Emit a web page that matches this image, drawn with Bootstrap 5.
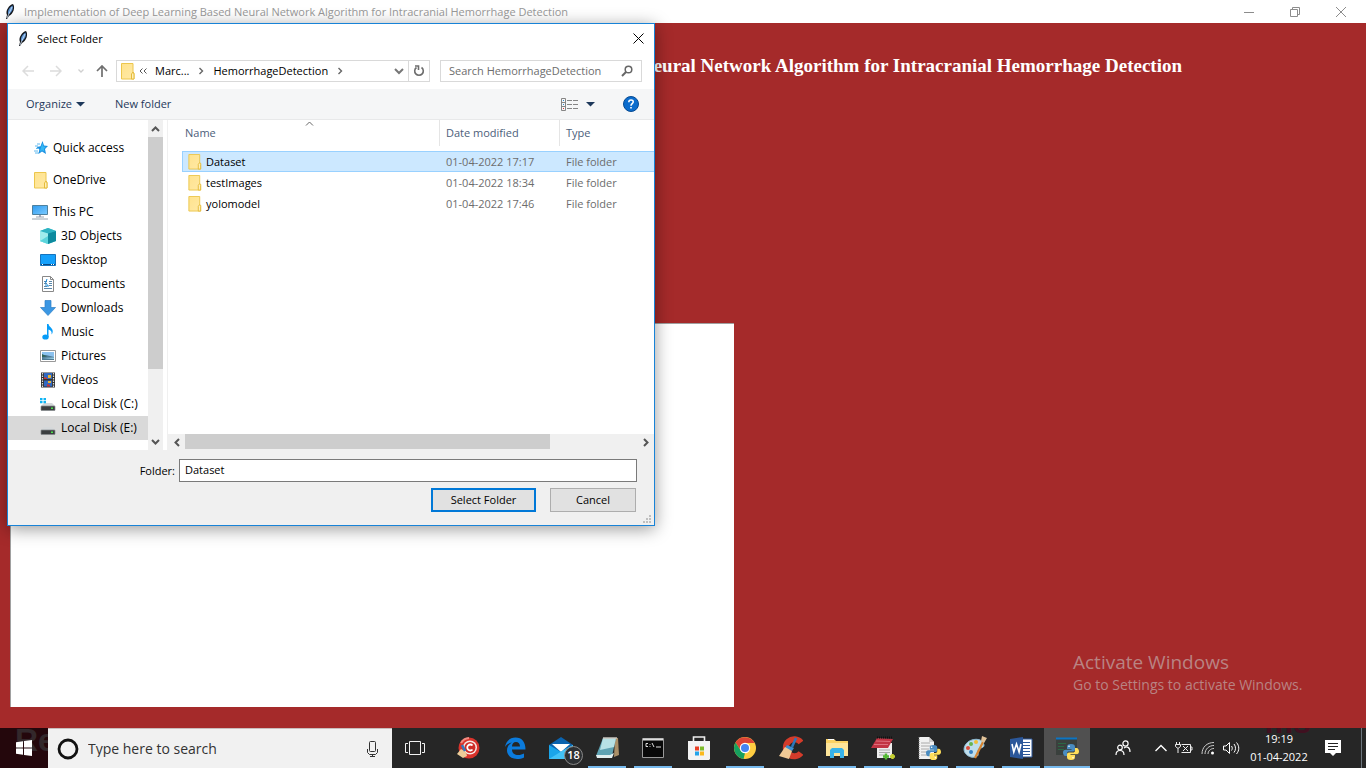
<!DOCTYPE html>
<html lang="en">
<head>
<meta charset="utf-8">
<meta name="viewport" content="width=device-width, initial-scale=1">
<title>Select Folder</title>
<link href="https://cdn.jsdelivr.net/npm/bootstrap@5.3.0/dist/css/bootstrap.min.css" rel="stylesheet">
<style>
body{font-family:"Open Sans","Noto Sans",sans-serif;font-size:11px;line-height:16px;color:#000;background:#a52a2a;overflow:hidden}
button{font:inherit;color:inherit;border:0;background:none;padding:0}
svg{display:block;flex:none}
a{color:inherit;text-decoration:none}
.app-bar{height:23px;background:#fff;color:#999;padding:0 2px 0 4px}
.win-btn{width:46px;height:20px;display:flex;align-items:center;justify-content:center}
.app-heading{font:bold 19px/24px "Liberation Serif",serif;color:#fff;padding:31px 184px 0 0;white-space:nowrap}
.canvas-text{width:53%;height:384px;margin:0 0 21px 10px;border:0;border-left:1px solid #a0a0a0;border-top:1px solid #a0a0a0;resize:none;background:#fff;border-radius:0;display:block}
.dialog-win{position:absolute;left:7px;top:23px;width:648px;background:#fff;border:1px solid #1883d7;box-shadow:0 3px 16px rgba(0,0,0,.4);z-index:5}
.dlg-title{height:29px;padding:0 10px 0 9px}
.addr-row{height:36px;padding:0 12px 0 10px}
.addr-box{height:22px;border:1px solid #d9d9d9}
.addr-path{width:293px}
.find-field{width:202px}
.find-field input,.folder-field{border:0;outline:0;font:inherit;padding:0;background:none;color:#000}
.find-field input::placeholder{color:#6d6d6d;opacity:1}
.cmd-row{height:31px;background:#f5f6f7;border-bottom:1px solid #e8e9ea;color:#1e395b;padding:0 15px 0 18px}
.new-btn{margin-left:30px}
.dlg-body{height:330px}
.side-tree{width:140px;padding-top:16px;overflow:hidden;font-size:12px}
.side-tree a{display:flex;align-items:center;height:24px;white-space:nowrap;gap:5px;padding-left:24px}
.side-tree a.sub-item{padding-left:32px}
.side-tree a.top-item{margin-bottom:8px;padding-left:25px;gap:4px}
.side-tree a.picked{background:#d9d9d9}
.bar-v{width:15px;background:#f0f0f0}
.bar-v .thumb{height:232px;background:#cdcdcd}
.bar-v .arrow,.bar-h .arrow{width:17px;height:17px;display:flex;align-items:center;justify-content:center}
.bar-v .arrow{width:15px}
.bar-h{height:16px;background:#f0f0f0}
.bar-h .thumb{width:365px;height:15px;background:#cdcdcd}
.file-pane{border-left:1px solid #f0f0f0;margin-left:4px}
.files{table-layout:fixed;width:472px;margin-left:14px;border-collapse:separate;border-spacing:0}
.files th{font-weight:400;color:#4c607a;height:26px;padding:0 0 0 6px;border-left:1px solid #e5e5e5}
.files th:first-child{border-left:0;padding-left:3px}
.files tbody::before{content:"";display:block;height:5px}
.files td{height:21px;padding:0 0 0 7px;color:#6d6d6d;white-space:nowrap;border:1px solid transparent;border-width:1px 0}
.files td:first-child{color:#000;padding-left:5px;border-left-width:1px}
.files .chosen td{background:#cce8ff;border-color:#99d1ff}
.sort-mark{position:absolute;left:137px;top:1px}
.dlg-foot{background:#f0f0f0;height:75px;padding:9px 17px 0 0}
.folder-field{width:458px;height:23px;border:1px solid #7a7a7a;background:#fff;padding:0 5px 2px}
.btn-row{gap:14px;padding:6px 1px 0 0}
.dlg-btn{height:24px;background:#e1e1e1;border:1px solid #adadad;width:86px}
.dlg-btn.main-btn{width:105px;border:2px solid #0078d7}
.grip{position:absolute;right:3px;bottom:2px}
.activate{position:absolute;left:1073px;bottom:73px;color:#b98383;font-size:14px;line-height:20px}
.activate div{font-size:19px;line-height:26px}
.taskbar{height:40px;background:#262626;color:#fff;position:relative;z-index:6}
.start-btn{width:48px;background:#24070c;position:relative;overflow:hidden;display:flex;align-items:center;justify-content:center}
.start-btn svg{position:relative}
.ghost{position:absolute;font:bold 32px/32px "Liberation Sans",sans-serif;color:#33282b;left:15px;top:-4px}
.task-search{width:344px;background:#f1f1f1;border-top:1px solid #c9bcbc;padding:0 12px 0 8px}
.task-search input{border:0;background:none;outline:0;font-size:14px;padding:0}
.task-search input::placeholder{color:#333;opacity:1}
.task-app{width:46px;height:40px;display:flex;align-items:center;justify-content:center;position:relative}
.task-app.running::after{content:"";position:absolute;left:4px;right:4px;bottom:0;height:2px;background:#76b9ed}
.task-app.active-app{background:#505050}
.task-app.active-app::after{left:0;right:0}
.mail-count{position:absolute;left:26px;top:18px;width:19px;height:19px;border-radius:50%;background:#2d3033;border:1px solid #8a8a8a;font-weight:600;text-align:center}
.clock-box{width:60px;text-align:center;line-height:18px;white-space:nowrap;position:relative}
.ghost-end{position:absolute;left:14px;top:-2px;width:50px;height:8px;overflow:hidden;color:#401020}
.ghost-end span{position:absolute;top:-22px;right:2px;font:bold 32px/32px "Liberation Sans",sans-serif}
.tray-btn{height:40px;display:flex;align-items:center;justify-content:center}
</style>
</head>
<body>
<svg width="0" height="0" class="position-absolute" aria-hidden="true">
<defs>
<linearGradient id="fold" x2="1" y2="1"><stop stop-color="#ffe38d"/><stop offset="1" stop-color="#ffe9a6"/></linearGradient>
<linearGradient id="scr" x2="1" y2="1"><stop stop-color="#2e9bf0"/><stop offset="1" stop-color="#7ccbff"/></linearGradient>
<symbol id="folder" viewBox="0 0 14 17"><path d="M.5.500h11.500v8.500l1 1v6H.5z" fill="url(#fold)" stroke="#ecc64c"/><path d="M10.500 16v-5l1.500-2 1 2V16z" fill="#fff0b8" stroke="#e5bb3a"/></symbol>
<symbol id="feather" viewBox="0 0 10 16"><path d="M1 15 2 11C0 7 4 1 8 0 10.500 3 8.500 10 4 12L2 15z" fill="#16191f"/><path d="M3 9.500C2.500 6 5 3 7.500 1.500 8.500 5 7 8 4 10z" fill="#5a94d6"/><path d="M2 14 7 3" stroke="#d2e4f7" stroke-width=".8"/></symbol>
<symbol id="python" viewBox="0 0 16 16"><path d="M8 0C5 0 4 1 4 3v2h4.500v.7H2.500C.8 5.700 0 7 0 8.500S.8 12 2.500 12H4V9.500C4 8 5 7.500 6 7.500h4c1.200 0 2-.8 2-2V3c0-2-1-3-4-3z" fill="#4a8cc0"/><path d="M8 16c3 0 4-1 4-3v-2H7.500v-.7h6C15.200 10.300 16 9 16 7.500S15.200 4 13.500 4H12v2.500c0 1.500-1 2-2 2H6c-1.200 0-2 .8-2 2V13c0 2 1 3 4 3z" fill="#ffdf5a"/><circle cx="6" cy="2.300" r=".8" fill="#fff"/><circle cx="10" cy="13.700" r=".8" fill="#fff"/></symbol>
<symbol id="drive" viewBox="0 0 16 16"><path d="M4 7h8l3 3H1z" fill="#d5d8da"/><rect x="1" y="10" width="14" height="4.500" rx=".6" fill="#3b3e40" stroke="#85898c" stroke-width=".7"/><rect x="11" y="11.500" width="2" height="1.500" fill="#4be04b"/></symbol>
</defs></svg>

<div class="d-flex flex-column vh-100">
<header class="app-bar d-flex align-items-center">
 <svg width="12" height="16"><use href="#feather"/></svg>
 <span class="ms-2 me-auto">Implementation of Deep Learning Based Neural Network Algorithm for Intracranial Hemorrhage Detection</span>
 <button class="win-btn" aria-label="Minimize"><svg width="10" height="10"><path d="M0 5.500h10" stroke="#8c8c8c"/></svg></button>
 <button class="win-btn" aria-label="Restore"><svg width="10" height="10" fill="none" stroke="#8c8c8c"><path d="M.5 2.500h7v7h-7zM2.500 2.500v-2h7v7h-2"/></svg></button>
 <button class="win-btn" aria-label="Close"><svg width="10" height="10"><path d="M0 0l10 10M10 0 0 10" stroke="#8c8c8c"/></svg></button>
</header>

<main class="flex-grow-1 d-flex flex-column">
 <h1 class="app-heading text-end mb-auto">Implementation of Deep Learning Based Neural Network Algorithm for Intracranial Hemorrhage Detection</h1>
 <textarea class="canvas-text" aria-label="Output"></textarea>
</main>

<section class="dialog-win" role="dialog" aria-label="Select Folder">
 <div class="dlg-title d-flex align-items-center">
  <svg width="12" height="16"><use href="#feather"/></svg><span class="ms-2 me-auto">Select Folder</span>
  <button aria-label="Close dialog"><svg width="11" height="11"><path d="M.5.5l10 10M10.500.5l-10 10" stroke="#000"/></svg></button>
 </div>
 <div class="addr-row d-flex align-items-center">
  <button class="ms-1" aria-label="Back"><svg width="12" height="12" fill="none" stroke="#dcdcdc" stroke-width="1.500"><path d="M12 6H1M6 1 1 6l5 5"/></svg></button>
  <button class="ms-3" aria-label="Forward"><svg width="12" height="12" fill="none" stroke="#dcdcdc" stroke-width="1.500"><path d="M0 6h11M6 1l5 5-5 5"/></svg></button>
  <button class="ms-3" aria-label="Recent"><svg width="6" height="6" fill="none" stroke="#d0d0d0" stroke-width="1.300"><path d="M.5 1.500 3 4l2.500-2.500"/></svg></button>
  <button class="ms-2 ps-1 me-2" aria-label="Up"><svg width="12" height="12" fill="none" stroke="#6f6f6f" stroke-width="1.700"><path d="M6 12V1M1 6l5-5 5 5"/></svg></button>
  <div class="addr-box addr-path d-flex align-items-center">
   <svg class="ms-1" width="14" height="17"><use href="#folder"/></svg>
   <svg class="ms-1" width="8" height="8" fill="none" stroke="#555"><path d="M3.500 1.500 1 4l2.500 2.500M7.500 1.500 5 4l2.500 2.500"/></svg>
   <a href="#" class="ms-2">Marc...</a>
   <svg class="mx-2" width="8" height="8" fill="none" stroke="#666" stroke-width="1.400"><path d="M2.500 1 5.500 4l-3 3"/></svg>
   <a href="#">HemorrhageDetection</a>
   <svg class="ms-2 me-auto" width="8" height="8" fill="none" stroke="#666" stroke-width="1.400"><path d="M2.500 1 5.500 4l-3 3"/></svg>
   <button class="me-1" aria-label="Previous locations"><svg width="10" height="8" fill="none" stroke="#777" stroke-width="2"><path d="M1 2l4 4 4-4"/></svg></button>
  </div>
  <button class="addr-box border-start-0 px-1" aria-label="Refresh"><svg width="12" height="12" fill="none" stroke="#6d6d6d" stroke-width="1.600"><path d="M8.500 2.500A4.300 4.300 0 1 1 3.500 2.500"/><path d="M2 1h3.500V5" /></svg></button>
  <div class="addr-box find-field d-flex align-items-center ms-auto px-2">
   <input class="flex-grow-1" type="text" aria-label="Search" placeholder="Search HemorrhageDetection">
   <svg width="12" height="12" fill="none" stroke="#666"><circle cx="7.500" cy="4.500" r="3.300" stroke-width="1.500"/><path d="M5 7 1 11" stroke-width="2"/></svg>
  </div>
 </div>
 <div class="cmd-row d-flex align-items-center">
  <button class="d-flex align-items-center">Organize<svg class="ms-1" width="9" height="5"><path d="M0 0h9L4.500 4.500z" fill="#1e395b"/></svg></button>
  <button class="new-btn me-auto">New folder</button>
  <button class="d-flex align-items-center me-4" aria-label="Change view">
   <svg width="17" height="13" fill="none" stroke="#858585"><path d="M.5.5h4v12h-4zM.5 4.500h4M.5 8.500h4"/><path d="M6 2.500h11M6 6.500h11M6 10.500h11" stroke-dasharray="5 1"/><path d="M2 10.500h1" stroke="#d33"/><path d="M2 2.500h1M2 6.500h1" stroke="#38c"/></svg>
   <svg class="ms-2 me-1" width="9" height="5"><path d="M0 0h9L4.500 4.500z" fill="#1e395b"/></svg></button>
  <button aria-label="Help"><svg width="16" height="16"><circle cx="8" cy="8" r="7.500" fill="#0b6ccd" stroke="#064a92"/><path d="M5.800 6.200c0-3 4.600-2.900 4.400-.2C10.100 7.600 8 7.800 8 9.800M8 11v1.600" fill="none" stroke="#fff" stroke-width="1.600"/></svg></button>
 </div>
 <div class="dlg-body d-flex">
  <nav class="side-tree" aria-label="Places">
   <a href="#" class="top-item"><svg width="16" height="14"><path d="m9.500 0 1.500 4.500 4 .5-3 3 1 5-4-2.500L5.500 13l.8-4.500L3.500 6l4-.8z" fill="#1b8fe0"/><path d="m9.500 2 1 3.500 2.500.3-2 2 .5 3-2.500-1.500-2 1.500.5-3z" fill="#35b8f5"/><path d="M4 3h3M2 5h3M3 7.500h3M1 10h4M2 12h4" stroke="#5fb8ee"/></svg>Quick access</a>
   <a href="#" class="top-item"><svg width="16" height="17"><use href="#folder"/></svg>OneDrive</a>
   <a href="#"><svg width="16" height="16"><path d="M.5 1.500h15v9H.5z" fill="url(#scr)" stroke="#4d819f"/><path d="M7 11h2v2H7z" fill="#aab"/><path d="M4 13h8M0 15h16" stroke="#9aa6b0"/></svg>This PC</a>
   <a href="#" class="sub-item"><svg width="16" height="16"><path d="m8 0 8 3v10l-8 3-8-3V3z" fill="#43c5d4"/><path d="M8 0l8 3-8 2.500L0 3z" fill="#2fb3c2"/><path d="M0 3l8 2.500V16L0 13z" fill="#9fecec"/><path d="M0 13l8-5v8z" fill="#5cd5dc"/><path d="M8 5.500 16 3v10l-8 3z" fill="#0d8a9e"/></svg>3D Objects</a>
   <a href="#" class="sub-item"><svg width="16" height="12"><path d="M.5.500h15v11H.5z" fill="#14a0fb" stroke="#1673bd"/><path d="M1 10.500h14" stroke="#064a86"/><path d="M2 10.500h2M11 10.500h3" stroke="#fff" stroke-dasharray="1"/></svg>Desktop</a>
   <a href="#" class="sub-item"><svg width="16" height="16"><path d="M2.500.500h8l3 3v12h-11z" fill="#fff" stroke="#888"/><path d="M10.500.500v3h3" fill="none" stroke="#888"/><path d="M4 5.500h3M9 5.500h3M4 7.500h3M9 7.500h3M4 10.500h3M9 9.500h3M4 12.500h8" stroke="#5a88ab"/><path d="M7 3l-1.500 4M5 9h3v2" stroke="#1489d8" fill="none"/></svg>Documents</a>
   <a href="#" class="sub-item"><svg width="16" height="16"><path d="M5 .5h6v7h4.500L8 15.500.500 7.500H5z" fill="#3b97e3" stroke="#2d7ec5" stroke-width=".7"/></svg>Downloads</a>
   <a href="#" class="sub-item"><svg width="16" height="16"><ellipse cx="5.500" cy="13" rx="3.200" ry="2.600" fill="#069cf8"/><path d="M7 0h1.500c.5 3.500 5.500 4 4 9l-1 1.500c.5-3-.5-4-3-5V13H7z" fill="#069cf8"/></svg>Music</a>
   <a href="#" class="sub-item"><svg width="16" height="12"><path d="M.5.500h15v11H.5z" fill="#fff" stroke="#999"/><path d="M2 2h12v8H2z" fill="#8cc2ef"/><path d="M2 5h4l8 2v3H2z" fill="#4d7a94"/><path d="M2 4l5 2.500L2 7z" fill="#2f6358"/><path d="M2 8l12-.500V9z" fill="#9ed5ee"/></svg>Pictures</a>
   <a href="#" class="sub-item"><svg width="16" height="16"><path d="M1 .5h14v15H1z" fill="#333"/><path d="M2.500 1v15M13.500 1v15" stroke="#ddd" stroke-width="1.200" stroke-dasharray="1.500 1"/><path d="M4 1h8v6H4zM4 8.500h8v6H4z" fill="#3169c2"/><path d="M4 5l3 1v1H4zM7 12l3 1v1.500H7z" fill="#c33"/><path d="M8 3h3v3H8zM8 9h3v2H8z" fill="#e9b432"/></svg>Videos</a>
   <a href="#" class="sub-item"><svg width="16" height="16"><use href="#drive"/><path d="M0 2h2.500v2.300H0zM3.500 2H6v2.300H3.500zM0 5h2.500v2.300H0zM3.500 5H6v2.300H3.500z" fill="#0eb4f4"/></svg>Local Disk (C:)</a>
   <a href="#" class="sub-item picked"><svg width="16" height="16"><use href="#drive"/></svg>Local Disk (E:)</a>
  </nav>
  <div class="bar-v d-flex flex-column">
   <div class="arrow"><svg width="9" height="6" fill="none" stroke="#555" stroke-width="2"><path d="M1 5l3.500-3.500L8 5"/></svg></div><div class="thumb"></div>
   <div class="arrow mt-auto"><svg width="9" height="6" fill="none" stroke="#555" stroke-width="2"><path d="M1 1l3.500 3.500L8 1"/></svg></div>
  </div>
  <div class="file-pane flex-grow-1 d-flex flex-column">
   <div class="position-relative overflow-hidden">
   <svg class="sort-mark" width="9" height="5" fill="none" stroke="#666"><path d="M1 4.500l3.500-3.500L8 4.500"/></svg>
   <table class="files"><colgroup><col style="width:257px"><col style="width:120px"><col></colgroup>
    <thead><tr><th>Name</th><th>Date modified</th><th>Type</th></tr></thead>
    <tbody>
     <tr class="chosen"><td><span class="d-flex align-items-center"><svg class="me-1" width="14" height="16"><use href="#folder"/></svg>Dataset</span></td><td>01-04-2022 17:17</td><td>File folder</td></tr>
     <tr><td><span class="d-flex align-items-center"><svg class="me-1" width="14" height="16"><use href="#folder"/></svg>testImages</span></td><td>01-04-2022 18:34</td><td>File folder</td></tr>
     <tr><td><span class="d-flex align-items-center"><svg class="me-1" width="14" height="16"><use href="#folder"/></svg>yolomodel</span></td><td>01-04-2022 17:46</td><td>File folder</td></tr>
    </tbody></table></div>
   <div class="bar-h d-flex mt-auto">
    <div class="arrow"><svg width="6" height="9" fill="none" stroke="#555" stroke-width="2"><path d="M5 1 1.500 4.500 5 8"/></svg></div><div class="thumb"></div>
    <div class="arrow ms-auto"><svg width="6" height="9" fill="none" stroke="#555" stroke-width="2"><path d="M1 1l3.500 3.500L1 8"/></svg></div>
   </div>
  </div>
 </div>
 <div class="dlg-foot">
  <div class="d-flex justify-content-end align-items-center"><label for="folderName" class="me-1">Folder:</label><input id="folderName" class="folder-field" type="text" value="Dataset"></div>
  <div class="btn-row d-flex justify-content-end"><button class="dlg-btn main-btn">Select Folder</button><button class="dlg-btn">Cancel</button></div>
 </div>
 <svg class="grip" width="8" height="8" fill="#bfbfbf"><path d="M6 0h2v2H6zM3 3h2v2H3zM6 3h2v2H6zM0 6h2v2H0zM3 6h2v2H3zM6 6h2v2H6z"/></svg>
</section>

<aside class="activate"><div>Activate Windows</div>Go to Settings to activate Windows.</aside>

<footer class="taskbar d-flex">
 <button class="start-btn" aria-label="Start"><span class="ghost" aria-hidden="true">Re</span><svg width="16" height="16" fill="#fff"><path d="M0 2.200 7 1.200v6.300H0zM8 1l8-1v7.500H8zM0 8.500h7v6.300l-7-1zM8 8.500h8V16l-8-1z"/></svg></button>
 <div class="task-search d-flex align-items-center">
  <svg width="24" height="24"><circle cx="12" cy="12" r="9" fill="none" stroke="#111" stroke-width="2.800"/></svg>
  <input class="flex-grow-1 ms-2" type="text" aria-label="Type here to search" placeholder="Type here to search">
  <svg width="16" height="18" fill="none" stroke="#333"><rect x="5.500" y="1.500" width="6" height="10" rx="1"/><path d="M3.500 9v3.500l2 2h6l2-2V9M8.500 14.500V17M6 16.500h5"/></svg>
 </div>
 <button class="task-app me-1" aria-label="Task view"><svg width="20" height="14" fill="none" stroke="#f2f2f2"><path d="M4.500.5h11v13h-11zM3 2.500H.5v9H3M17 2.500h2.500v9H17"/></svg></button>
 <div class="d-flex ms-1">
 <button class="task-app" aria-label="Cleaner tool"><svg width="24" height="24"><circle cx="12" cy="12" r="10.500" fill="#d9332c"/><path d="M4 7a10 10 0 0 1 8-5" stroke="#f28b80" stroke-width="2" fill="none"/><circle cx="13" cy="11.500" r="7" fill="#f6e9e6"/><circle cx="13" cy="11.500" r="5.500" fill="#cf2c27"/><path d="M15.500 9.500a3 3 0 1 0 0 4" fill="none" stroke="#fff" stroke-width="1.800"/><path d="M4 13l5 3 1 4-4 2-6-4z" fill="#edcc98"/><path d="M5 9l3 6" stroke="#3478bd" stroke-width="2.500"/></svg></button>
 <button class="task-app" aria-label="Edge"><svg width="22" height="22"><path d="M1 10C2 4 6 .5 11.500.5 18 .5 21.500 5 21.500 12.500H8c0 4 3 5.500 6 5.500 2.500 0 4.500-.6 6-1.500v4c-2 1.200-4.500 1.500-7 1.500C7 22 3 18 3 13.500 3 10 5 7 8 5.500 5 6 2.500 7.500 1 10zm7-.5h8C16 7 14.500 5 12 5 9.500 5 8 7 8 9.500z" fill="#0b7bdc" fill-rule="evenodd"/></svg></button>
 <button class="task-app" aria-label="Mail, 18 unread"><svg width="24" height="24"><path d="M0 9l12-8 12 8v14H0z" fill="#0a63af"/><path d="M3 8h18l-9 8z" fill="#fff"/><path d="M0 9l12 7L24 9v14H0z" fill="#1aa5ea"/><path d="M0 23 13 15 24 9v14z" fill="#42c2f7"/></svg><span class="mail-count">18</span></button>
 <button class="task-app running" aria-label="Notepad"><svg width="24" height="24"><path d="M20 2h3l1 17-5 2z" fill="#aa8f68"/><path d="M8 2h13l-4 18H1z" fill="#5fa3b3"/><path d="M8 2h13l-2 9-14 3z" fill="#b7e1e5"/><path d="M1 19h14l4-2-2 5H2z" fill="#e2eff0"/><path d="M8 2h14" stroke="#c9c5be" stroke-width="1.500"/></svg></button>
 <button class="task-app running" aria-label="Command Prompt"><svg width="22" height="20"><path d="M.5.500h21v19H.5z" fill="#080808" stroke="#999"/><path d="M1 1.500h20" stroke="#ddd" stroke-width="2"/><path d="M6 5.500H4v3h2M8 6v.8M8 8v.8M10 5l2 4M14 9h5" stroke="#ddd" fill="none"/></svg></button>
 <button class="task-app" aria-label="Store"><svg width="24" height="24"><path d="M6.500 6V1h11v5" fill="none" stroke="#eee" stroke-width="1.600"/><path d="M1 5h22v18l-1 1H2l-1-1z" fill="#f3f3f3"/><path d="M8 10.500h4v4H8z" fill="#e83e24"/><path d="M13 10.500h4v4h-4z" fill="#7cba2a"/><path d="M8 15.500h4v4H8z" fill="#23a3ea"/><path d="M13 15.500h4v4h-4z" fill="#fbb91c"/></svg></button>
 <button class="task-app running" aria-label="Chrome"><svg width="22" height="22"><circle cx="11" cy="11" r="11" fill="#ffcd41"/><path d="M1.500 5.500A11 11 0 0 1 20.600 6H11L6.700 13.500z" fill="#db4437"/><path d="M1.500 5.500 6.700 13.500l4.300 2.500-1.500 5.900A11 11 0 0 1 1.500 5.500z" fill="#16a05f"/><circle cx="11" cy="11" r="5.200" fill="#fff"/><circle cx="11" cy="11" r="4" fill="#4485f3"/></svg></button>
 <button class="task-app" aria-label="CCleaner"><svg width="24" height="24"><path d="M22 6.500A8.500 8.500 0 1 0 22 17" fill="none" stroke="#d43b2a" stroke-width="6"/><path d="M17 2l-4 9" stroke="#2b77bd" stroke-width="2.500"/><path d="m8 9 7 3-2 3-7-3z" fill="#3b8fd2"/><path d="M6 11l7 4-3 8-10-3z" fill="#f0c995"/></svg></button>
 <button class="task-app running" aria-label="File Explorer"><svg width="22" height="20"><path d="M0 1h8l2 2h12v15H0z" fill="#fbd264"/><path d="M2 1.500h6" stroke="#fff"/><path d="M0 5h22v13H0z" fill="#fee59a"/><path d="M4 20v-8l2-2h10l2 2v8h-4v-5H8v5z" fill="#39b3e8"/></svg></button>
 <button class="task-app running" aria-label="Notes"><svg width="24" height="24"><path d="M6 7h15v15H6z" fill="#eee"/><path d="M8 14h11M8 16.500h11M8 19h8" stroke="#aaa"/><path d="m6 2 16 1-5 9H0z" fill="#c23544"/><path d="m5 5 14 .5M3 8.500h14" stroke="#de6f7c"/><path d="M6 1.500h16" stroke="#111" stroke-width="2" stroke-dasharray="1 1"/><path d="M12 20.500h6M15 17.500v6" stroke="#53b932" stroke-width="2.500"/><path d="M19 20.500h5M21.500 18v5" stroke="#c5cf30" stroke-width="2.500"/></svg></button>
 <button class="task-app running" aria-label="Python script"><svg width="24" height="24"><path d="M2 1h10l5 5v17H2z" fill="#f1f1f1"/><path d="M12 1v5h5" fill="#ccc"/><path d="M4 7h9M4 10h10M4 13h8M4 16h8M4 19h8" stroke="#aaa"/><path d="M2 1v22" stroke="#777" stroke-dasharray="1"/><use href="#python" x="9" y="9" width="15" height="15"/></svg></button>
 <button class="task-app running" aria-label="Paint"><svg width="24" height="24"><path d="M3 8c4-6 17-7 18 1 0 4-5 2-6 5s2 5-2 7C6 23-3 16 3 8z" fill="#bfddeb" stroke="#8cb9d0"/><circle cx="5" cy="12" r="2" fill="#db4c39"/><circle cx="8" cy="8" r="2" fill="#64b451"/><circle cx="13" cy="6" r="2" fill="#f1be38"/><circle cx="8" cy="16" r="2" fill="#357fc2"/><path d="M21 4 12 22" stroke="#d78431" stroke-width="2.200"/><path d="m19 0 5 2-3 5-3-2z" fill="#e1c298"/></svg></button>
 <button class="task-app running" aria-label="Word"><svg width="24" height="24"><path d="M12 3h11v18H12z" fill="#fff" stroke="#2b579a"/><path d="M14 6.500h7M14 9.500h7M14 12.500h7M14 15.500h7M14 18.500h7" stroke="#2b579a"/><path d="M1 3l13-2v22L1 21z" fill="#2b579a"/><path d="m3 8 1.800 8L7.500 8l2.600 8L12 8" fill="none" stroke="#fff" stroke-width="1.600"/></svg></button>
 <button class="task-app running active-app" aria-label="Python app"><svg width="24" height="24"><path d="M1 2h21v17H1z" fill="#3a403d"/><path d="M1 2.500h21" stroke="#0b75c4" stroke-width="2"/><path d="M3 7.500h8M3 10.500h6M3 13.500h6" stroke="#2c6844"/><use href="#python" x="8" y="8" width="16" height="16"/></svg></button>
 </div>
 <div class="d-flex ms-auto align-items-center">
  <button class="tray-btn me-4" aria-label="People"><svg width="16" height="16" fill="none" stroke="#fff" stroke-width="1.200"><circle cx="10.500" cy="3.500" r="2.600"/><circle cx="5" cy="7.500" r="2.300"/><path d="M1 15c0-6 8-6 8 0M9 8c3-2 6-1 6 4"/></svg></button>
  <button class="tray-btn me-2" aria-label="Show hidden icons"><svg width="12" height="8" fill="none" stroke="#fff" stroke-width="1.400"><path d="M.5 7 6 1.500 11.500 7"/></svg></button>
  <button class="tray-btn me-2" aria-label="Battery"><svg width="18" height="14" fill="none" stroke="#eee"><path d="M6.500 3.500h9v8h-9M15.500 6h1.500v3h-1.500M1.500 1v3M4.500 1v3M.5 3.500h5v2L3 7.500.5 5.500zM3 7.500V12M8 5l5 5M13 5l-5 5"/></svg></button>
  <button class="tray-btn me-2" aria-label="Wi-Fi"><svg width="14" height="14" fill="none" stroke="#ccc"><path d="M1 13C1 6 6 1.500 13 1.500M4 13c0-5 4-8.500 9-8.500M7 13c0-3 2.500-5.500 6-5.500"/><circle cx="11.500" cy="12" r="1.500" fill="#fff" stroke="none"/></svg></button>
  <button class="tray-btn me-2" aria-label="Volume"><svg width="18" height="14" fill="none" stroke="#fff"><path d="M.5 5h2.500L6.500 1.500v11L3 9H.5zM8.500 5c1 1.500 1 3 0 4.500M11 3c2 2.500 2 6 0 8.500M13.500 1.500c3 3.500 3 8 0 11.500"/></svg></button>
  <div class="clock-box"><div class="ghost-end" aria-hidden="true"><span>ems</span></div><div class="position-relative">19:19<br>01-04-2022</div></div>
  <button class="tray-btn mx-3" aria-label="Notifications"><svg width="16" height="16"><path d="M0 0h16v13h-5l-3 3-3-3H0z" fill="#fff"/><path d="M3 3.500h10M3 6.500h10M3 9.500h7" stroke="#222"/></svg></button>
  <div class="border-start border-secondary h-100 ms-1 pe-1"></div>
 </div>
</footer>
</div>
<script src="https://cdn.jsdelivr.net/npm/bootstrap@5.3.0/dist/js/bootstrap.bundle.min.js"></script>
</body>
</html>
